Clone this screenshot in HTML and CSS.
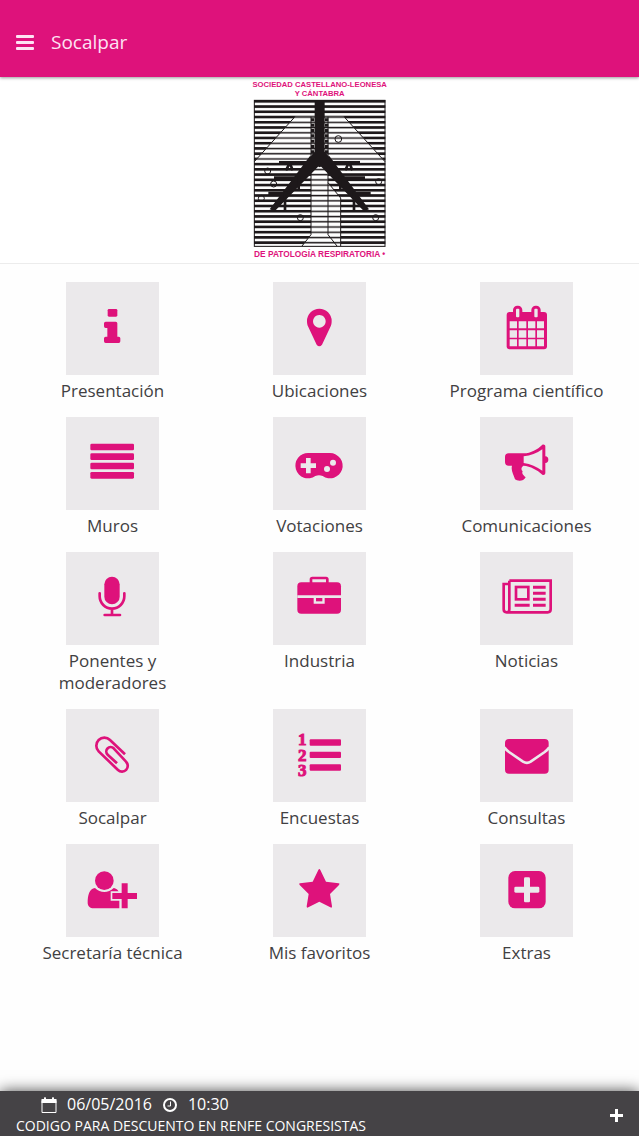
FILE: index.html
```html
<!DOCTYPE html>
<html lang="es">
<head>
    <meta charset="UTF-8">
    <meta name="viewport" content="width=device-width, initial-scale=1.0">
    <title>Socalpar</title>
    <link rel="stylesheet" href="styles.css">
</head>
<body>
    <header class="header">
        <button type="button" class="menu-btn" aria-label="Menú">
            <svg viewBox="0 0 18 16" width="18" height="16">
                <rect width="18" height="3" rx="1"/>
                <rect y="6" width="18" height="3" rx="1"/>
                <rect y="12" width="18" height="3" rx="1"/>
            </svg>
        </button>
        <h1>Socalpar</h1>
    </header>

    <main class="content">
        <div class="banner">
            <svg class="logo" viewBox="36 24 408 546" role="img">
                <defs>
                    <pattern id="thick" y="90" width="20" height="15.7" patternUnits="userSpaceOnUse">
                        <rect width="20" height="8"/>
                    </pattern>
                    <pattern id="thin" y="90" width="20" height="15.7" patternUnits="userSpaceOnUse">
                        <rect y="2" width="20" height="4.5"/>
                    </pattern>
                </defs>
                <text x="239" y="52" class="logo-text">SOCIEDAD CASTELLANO-LEONESA</text>
                <text x="239" y="79" class="logo-text">Y CÁNTABRA</text>

                <!-- striped background -->
                <rect x="42" y="90" width="394" height="440" fill="url(#thick)"/>
                <path d="M165 140H312L436 275H42z" fill="#fff"/>
                <path d="M165 140H312L436 275H42z" fill="url(#thin)"/>
                <path d="M213 290h50v48l39 46v144H186l27-34z" fill="#fff"/>
                <path d="M213 290h50v48l39 46v144H186l27-34z" fill="url(#thin)"/>
                <g class="logo-line">
                    <rect x="43" y="91" width="392" height="438"/>
                    <path d="M165 140L43 275M312 140L435 275M213 140V494L186 528M264 140V494L291 528M264 338L302 384V528"/>
                    <path d="M218 145v105M260 145v105" stroke-width="10" stroke-dasharray="9 7"/>
                </g>

                <!-- bronchi -->
                <path d="M224 95h30v150l24 28-39 19-39-19 24-28z"/>
                <path d="M210 258l30 26L104 424l-15-6zM268 258l-30 26 134 140 15-6z"/>
                <path d="M117 273h243v12H117zM102 319h80v12h-80zM296 319h79v12h-79zM85 365h57v13H85zM338 365h54v13h-54z"/>
                <g class="logo-line logo-branch">
                    <path d="M147 283l-9 18M151 283l7 18M324 283l-8 18M330 283l7 18M176 320v43M301 320v42M135 370v53M342 370v53"/>
                </g>
                <g class="logo-line">
                    <circle cx="295" cy="207" r="10"/>
                    <circle cx="83" cy="303" r="9"/>
                    <circle cx="101" cy="342" r="9"/>
                    <circle cx="64" cy="385" r="9"/>
                    <circle cx="416" cy="335" r="9"/>
                    <circle cx="181" cy="443" r="9"/>
                    <circle cx="407" cy="443" r="9"/>
                </g>
                <text x="239" y="562" class="logo-text logo-text-bottom">DE PATOLOGÍA RESPIRATORIA •</text>
            </svg>
        </div>

        <nav class="menu">
            <a href="#presentacion" class="menu-item">
                <svg class="tile" viewBox="0 0 279 279">
                    <rect x="125" y="81" width="29" height="23" rx="4"/>
                    <path d="M119 119h30a5 5 0 0 1 5 5v40h4a5 5 0 0 1 5 5v9a5 5 0 0 1-5 5h-39a5 5 0 0 1-5-5v-9a5 5 0 0 1 5-5h5v-26h-5a5 5 0 0 1-5-5v-9a5 5 0 0 1 5-5z"/>
                </svg>
                <span>Presentación</span>
            </a>
            <a href="#ubicaciones" class="menu-item">
                <svg class="tile" viewBox="0 0 279 279">
                    <path fill-rule="evenodd" d="M139 80a37 37 0 0 1 37 37c0 8-1 13-4 18l-25 53q-8 10-16 0l-25-53c-3-5-4-10-4-18a37 37 0 0 1 37-37zM139 99a19 19 0 1 0 .1 0z"/>
                </svg>
                <span>Ubicaciones</span>
            </a>
            <a href="#programa" class="menu-item">
                <svg class="tile" viewBox="0 0 279 279">
                    <rect x="80" y="90" width="121" height="112" rx="9"/>
                    <rect x="99" y="71" width="28" height="42" rx="13"/>
                    <rect x="154" y="71" width="28" height="42" rx="13"/>
                    <g class="cut">
                        <rect x="108" y="80" width="10" height="26" rx="3"/>
                        <rect x="163" y="80" width="10" height="26" rx="3"/>
                        <path d="M89 118h22v21H89zM116 118h23v21h-23zM144 118h22v21h-22zM171 118h21v21h-21zM89 145h22v22H89zM116 145h23v22h-23zM144 145h22v22h-22zM171 145h21v22h-21zM89 172h22v21H89zM116 172h23v21h-23zM144 172h22v21h-22zM171 172h21v21h-21z"/>
                    </g>
                </svg>
                <span>Programa científico</span>
            </a>
            <a href="#muros" class="menu-item">
                <svg class="tile" viewBox="0 0 279 279">
                    <rect x="73" y="80" width="131" height="20" rx="4"/>
                    <rect x="73" y="109" width="131" height="20" rx="4"/>
                    <rect x="73" y="137" width="131" height="20" rx="4"/>
                    <rect x="73" y="165" width="131" height="20" rx="4"/>
                </svg>
                <span>Muros</span>
            </a>
            <a href="#votaciones" class="menu-item">
                <svg class="tile" viewBox="0 0 279 279">
                    <path d="M106 108h65a38 38 0 1 1-22 69q-11-5-22 0a38 38 0 1 1-21-69z"/>
                    <g class="cut">
                        <path d="M99 123h14v16h16v14h-16v16H99v-16H83v-14h16z"/>
                        <circle cx="180" cy="137" r="9"/>
                        <circle cx="162" cy="156" r="9"/>
                    </g>
                </svg>
                <span>Votaciones</span>
            </a>
            <a href="#comunicaciones" class="menu-item">
                <svg class="tile" viewBox="0 0 279 279">
                    <path fill-rule="evenodd" d="M86 109h45c22-1 41-11 56-26 4-2 9 0 9 5v30c6 0 9 5 9 10s-3 10-9 10v30c0 5-5 7-9 5-16-15-35-25-57-27-6 4-8 12-2 17-4 7 3 12 9 18-6 13-25 12-32 6-4-14-13-25-9-41H86a11 11 0 0 1-11-11v-15a11 11 0 0 1 11-11zM131 118v20c21 3 39 11 56 23V97c-17 12-35 19-56 21z"/>
                </svg>
                <span>Comunicaciones</span>
            </a>
            <a href="#ponentes" class="menu-item">
                <svg class="tile" viewBox="0 0 279 279">
                    <rect x="115" y="74" width="46" height="83" rx="23"/>
                    <path class="stroke" d="M101 124v9a37 37 0 0 0 74 0v-9M138 170v19M116 189h46"/>
                </svg>
                <span>Ponentes y moderadores</span>
            </a>
            <a href="#industria" class="menu-item">
                <svg class="tile" viewBox="0 0 279 279">
                    <path class="stroke" d="M114 95V82q0-4 4-4h41q4 0 4 4v13"/>
                    <rect x="73" y="91" width="131" height="94" rx="12"/>
                    <path class="cut" d="M73 130h131v8h-49v17h-33v-17H73z"/>
                    <rect x="129" y="138" width="19" height="10"/>
                </svg>
                <span>Industria</span>
            </a>
            <a href="#noticias" class="menu-item">
                <svg class="tile" viewBox="0 0 279 279">
                    <path class="stroke square" d="M88 86H212v86q0 9-9 9H80q-9 0-9-9V96h17M88 86v86q0 8-6 9"/>
                    <rect class="stroke square" x="108" y="105" width="37" height="37"/>
                    <path d="M159 101h38v9h-38zM159 119h38v9h-38zM159 137h38v9h-38zM159 155h38v9h-38zM104 155h45v9h-45z"/>
                </svg>
                <span>Noticias</span>
            </a>
            <a href="#socalpar" class="menu-item">
                <svg class="tile" viewBox="0 0 279 279">
                    <path class="stroke square" d="M177 136L132 93A24 24 0 0 0 98 127L156 183A17 17 0 0 0 180 158L143 118A13 13 0 0 0 125 137L153 163"/>
                </svg>
                <span>Socalpar</span>
            </a>
            <a href="#encuestas" class="menu-item">
                <svg class="tile" viewBox="0 0 279 279">
                    <text class="digits">
                        <tspan x="88" y="109">1</tspan><tspan x="88" y="156">2</tspan><tspan x="88" y="202">3</tspan>
                    </text>
                    <rect x="110" y="91" width="94" height="19" rx="3"/>
                    <rect x="110" y="128" width="94" height="19" rx="3"/>
                    <rect x="110" y="166" width="94" height="19" rx="3"/>
                </svg>
                <span>Encuestas</span>
            </a>
            <a href="#consultas" class="menu-item">
                <svg class="tile" viewBox="0 0 279 279">
                    <rect x="75" y="90" width="131" height="104" rx="12"/>
                    <path class="cut-line" d="M73 115q6 8 14 14l42 29q12 7 23 0l42-29q8-6 14-14"/>
                </svg>
                <span>Consultas</span>
            </a>
            <a href="#secretaria" class="menu-item">
                <svg class="tile" viewBox="0 0 279 279">
                    <circle cx="115" cy="110" r="28"/>
                    <path d="M87 132c16 16 40 16 56 0 9 1 17 9 17 20v41H83c-11 0-18-7-18-17 0-22 5-42 22-44z"/>
                    <path class="plus" d="M167 118h18v29h28v18h-28v28h-18v-28h-28v-18h28z"/>
                </svg>
                <span>Secretaría técnica</span>
            </a>
            <a href="#favoritos" class="menu-item">
                <svg class="tile" viewBox="0 0 279 279">
                    <path d="M136 78q3-6 6 0l17 35 38 5q5 1 1 5l-27 27 6 37q0 6-5 3l-33-17-33 17q-5 3-5-3l6-37-27-27q-4-4 1-5l38-5z"/>
                </svg>
                <span>Mis favoritos</span>
            </a>
            <a href="#extras" class="menu-item">
                <svg class="tile" viewBox="0 0 279 279">
                    <rect x="85" y="81" width="112" height="112" rx="20"/>
                    <g class="cut">
                        <rect x="132" y="100" width="18" height="75" rx="4"/>
                        <rect x="103" y="128" width="75" height="18" rx="4"/>
                    </g>
                </svg>
                <span>Extras</span>
            </a>
        </nav>
    </main>

    <footer class="footer">
        <div class="news">
            <div class="news-date">
                <svg viewBox="0 0 16 16" width="16" height="16">
                    <path d="M1 3.500V15.500H15V3.500" fill="none" stroke="#fff"/>
                    <path d="M.5 2H3V1q1-2 2 0v1h6V1q1-2 2 0v1h2.500v4H.500z"/>
                </svg>
                <span>06/05/2016</span>
                <svg viewBox="0 0 16 16" width="16" height="16">
                    <circle cx="8" cy="8" r="6" fill="none" stroke="#fff" stroke-width="2"/>
                    <path d="M8.500 4.500V9H5.500" fill="none" stroke="#fff"/>
                </svg>
                <span>10:30</span>
            </div>
            <p class="news-title">CODIGO PARA DESCUENTO EN RENFE CONGRESISTAS</p>
        </div>
        <button type="button" class="more-btn" aria-label="Ver más">
            <svg viewBox="0 0 13 13" width="13" height="13">
                <path d="M5 0h3v5h5v3H8v5H5V8H0V5h5z"/>
            </svg>
        </button>
    </footer>
</body>
</html>
```

FILE: styles.css
```css
:root {
    --primary: #de127b;
    --tile: #ebe9eb;
    --text: #414042;
    --dark: #454346;
}

* {
    margin: 0;
    padding: 0;
    box-sizing: border-box;
    font-family: 'Open Sans', 'Noto Sans', sans-serif;
}

body {
    min-height: 100vh;
    display: flex;
    flex-direction: column;
    background-color: #fefefe;
    color: var(--text);
}

button {
    display: flex;
    background: none;
    border: none;
    cursor: pointer;
}

.header {
    display: flex;
    align-items: center;
    gap: 17px;
    padding: 29px 16px 21px;
    background-color: var(--primary);
    box-shadow: 0 1px 3px rgba(0,0,0,0.4);
    z-index: 1;
}

.header h1 {
    font-size: 19px;
    font-weight: normal;
    line-height: 27px;
    color: #fde3f3;
}

.menu-btn svg {
    fill: #fde3f3;
}

.content {
    flex: 1;
}

.banner {
    display: flex;
    justify-content: center;
    padding: 1px 0 3px;
    background: white;
    border-bottom: 1px solid #ececec;
}

.logo {
    width: 136px;
    height: 182px;
    overflow: visible;
    fill: #1d181a;
}

.logo-text {
    font-family: 'Liberation Sans', Arial, sans-serif;
    font-size: 23px;
    font-weight: bold;
    text-anchor: middle;
    fill: var(--primary);
}

.logo-text-bottom {
    font-size: 25px;
}

.logo-line {
    fill: none;
    stroke: #1d181a;
    stroke-width: 3;
}

.logo-branch {
    stroke-width: 8;
}

.menu {
    display: grid;
    grid-template-columns: repeat(3, 1fr);
    row-gap: 15px;
    padding: 18px 9px;
}

.menu-item {
    display: flex;
    flex-direction: column;
    align-items: center;
    gap: 5px;
    font-size: 17px;
    line-height: 22px;
    text-align: center;
    text-decoration: none;
    color: var(--text);
}

.menu-item span {
    max-width: 160px;
}

.tile {
    width: 93px;
    height: 93px;
    background-color: var(--tile);
    fill: var(--primary);
}

.tile .cut {
    fill: var(--tile);
}

.tile .cut-line {
    fill: none;
    stroke: var(--tile);
    stroke-width: 8;
}

.tile .stroke {
    fill: none;
    stroke: var(--primary);
    stroke-width: 8;
    stroke-linecap: round;
}

.tile .square {
    stroke-linecap: butt;
}

.tile .plus {
    stroke: var(--tile);
    stroke-width: 10;
    paint-order: stroke;
}

.digits {
    font-family: 'Liberation Serif', 'Times New Roman', serif;
    font-size: 51px;
    font-weight: bold;
    text-anchor: middle;
    stroke: var(--primary);
    stroke-width: 3;
}

.digits tspan {
    font-family: inherit;
}

.footer {
    display: flex;
    align-items: center;
    justify-content: space-between;
    padding: 3px 16px 0;
    background-color: var(--dark);
    box-shadow: 0 0 14px rgba(0,0,0,0.7);
    color: white;
    font-weight: 500;
}

.footer svg {
    fill: white;
}

.news-date {
    display: flex;
    align-items: center;
    gap: 10px;
    padding-left: 25px;
    font-size: 16px;
    line-height: 21px;
}

.news-title {
    font-size: 14px;
    line-height: 21px;
}
```
